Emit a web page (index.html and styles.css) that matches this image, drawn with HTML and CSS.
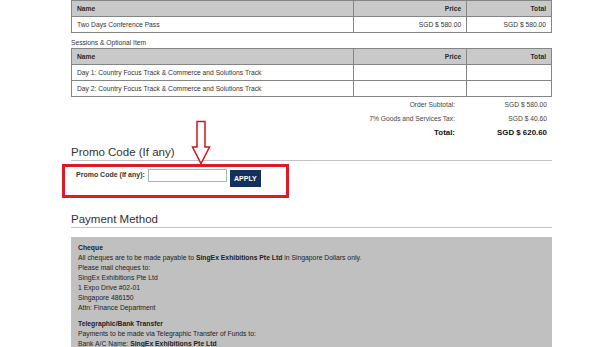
FILE: index.html
```html
<!DOCTYPE html>
<html lang="en">
<head>
  <meta charset="UTF-8" />
  <title>Checkout Summary</title>
  <link rel="stylesheet" href="styles.css">
</head>
<body>
  <div class="page">
    <table class="items">
      <tr>
        <th class="col-name">Name</th>
        <th class="col-price">Price</th>
        <th class="col-total">Total</th>
      </tr>
      <tr>
        <td>Two Days Conference Pass</td>
        <td class="num">SGD $ 580.00</td>
        <td class="num">SGD $ 580.00</td>
      </tr>
    </table>

    <p class="sub-title">Sessions &amp; Optional Item</p>
    <table class="items">
      <tr>
        <th class="col-name">Name</th>
        <th class="col-price">Price</th>
        <th class="col-total">Total</th>
      </tr>
      <tr>
        <td>Day 1: Country Focus Track &amp; Commerce and Solutions Track</td>
        <td class="num"></td>
        <td class="num"></td>
      </tr>
      <tr>
        <td>Day 2: Country Focus Track &amp; Commerce and Solutions Track</td>
        <td class="num"></td>
        <td class="num"></td>
      </tr>
    </table>

    <div class="totals">
      <div class="totals-row">
        <span class="label">Order Subtotal:</span>
        <span class="value">SGD $ 580.00</span>
      </div>
      <div class="totals-row">
        <span class="label">7% Goods and Services Tax:</span>
        <span class="value">SGD $ 40.60</span>
      </div>
      <div class="totals-row grand">
        <span class="label">Total:</span>
        <span class="value">SGD $ 620.60</span>
      </div>
    </div>

    <h2 class="section-title">Promo Code (If any)</h2>
    <form class="promo-box">
      <label for="promo">Promo Code (If any):</label>
      <input type="text" id="promo" />
      <button type="button">APPLY</button>
    </form>

    <!-- annotation arrow pointing at the promo box -->
    <svg class="arrow" width="20" height="46" viewBox="0 0 20 46">
      <polygon points="6,1.5 14,1.5 14,27 18.5,27 10,43.5 1.5,27 6,27" fill="#fff" stroke="#d2141c" stroke-width="1.5" stroke-linejoin="miter" />
    </svg>

    <h2 class="section-title">Payment Method</h2>
    <div class="pay-box">
      <div class="pay-block">
        <strong>Cheque</strong><br>
        All cheques are to be made payable to <strong>SingEx Exhibitions Pte Ltd</strong> in Singapore Dollars only.<br>
        Please mail cheques to:<br>
        SingEx Exhibitions Pte Ltd<br>
        1 Expo Drive #02-01<br>
        Singapore 486150<br>
        Attn: Finance Department
      </div>
      <div class="pay-block">
        <strong>Telegraphic/Bank Transfer</strong><br>
        Payments to be made via Telegraphic Transfer of Funds to:<br>
        Bank A/C Name: <strong>SingEx Exhibitions Pte Ltd</strong>
      </div>
    </div>
  </div>
</body>
</html>
```

FILE: styles.css
```css
* {
  margin: 0;
  padding: 0;
  box-sizing: border-box;
}

body {
  background: #fff;
  color: #333;
  font-family: 'Liberation Sans', Arial, sans-serif;
}

.page {
  position: relative;
  width: 481px;
  margin-left: 71px;
}

.items {
  width: 100%;
  border-collapse: collapse;
  font-size: 6.7px;
  color: #333;
}

.items th,
.items td {
  height: 16px;
  padding: 0 5px;
  border: 1px solid #858585;
  text-align: left;
}

.items th {
  background: #c9c9c9;
  font-weight: bold;
  color: #2a2a2a;
}

.col-name { width: 283px; }
.col-price { width: 113px; }
.col-total { width: 85px; }

.items th.col-price,
.items th.col-total,
.items td.num {
  text-align: right;
}

.sub-title {
  font-size: 6.7px;
  line-height: 10px;
  margin: 5px 0 0;
}

.totals {
  padding-top: 1px;
  font-size: 6.7px;
  color: #444;
}

.totals-row {
  display: grid;
  grid-template-columns: 283px 105px 93px;
  line-height: 14px;
}

.totals-row .label {
  grid-column: 2;
  text-align: right;
  padding-right: 4px;
  white-space: nowrap;
}

.totals-row .value {
  grid-column: 3;
  text-align: right;
  padding-right: 5px;
}

.totals-row.grand {
  font-size: 7.9px;
  font-weight: bold;
  color: #111;
  line-height: 13px;
}

.section-title {
  font-size: 11.5px;
  font-weight: normal;
  line-height: 15px;
  color: #333;
  margin-top: 6px;
  border-bottom: 1px solid #c4c4c4;
}

.promo-box {
  display: flex;
  align-items: flex-start;
  gap: 3px;
  width: 227px;
  margin: 3px 0 0 -9px;
  padding: 2px 0 8px 11px;
  border: 3px solid #dc1c24;
}

.promo-box label {
  font-size: 7px;
  font-weight: bold;
  line-height: 12px;
  color: #333;
}

.promo-box input {
  width: 79px;
  height: 13px;
  border: 1px solid #9db4cf;
  background: #fff;
}

.promo-box button {
  width: 31px;
  height: 17px;
  margin-top: 1px;
  border: none;
  background: #14305f;
  color: #fff;
  font-family: 'Liberation Sans', Arial, sans-serif;
  font-size: 7px;
  font-weight: bold;
}

.arrow {
  position: absolute;
  left: 120px;
  top: 120px;
}

.promo-box + .arrow + .section-title {
  margin-top: 14px;
}

.pay-box {
  margin-top: 9px;
  background: #c0c0c0;
  padding: 6px 7px 6px;
  font-size: 6.8px;
  line-height: 10px;
  color: #222;
}

.pay-block + .pay-block {
  margin-top: 6px;
}
```
